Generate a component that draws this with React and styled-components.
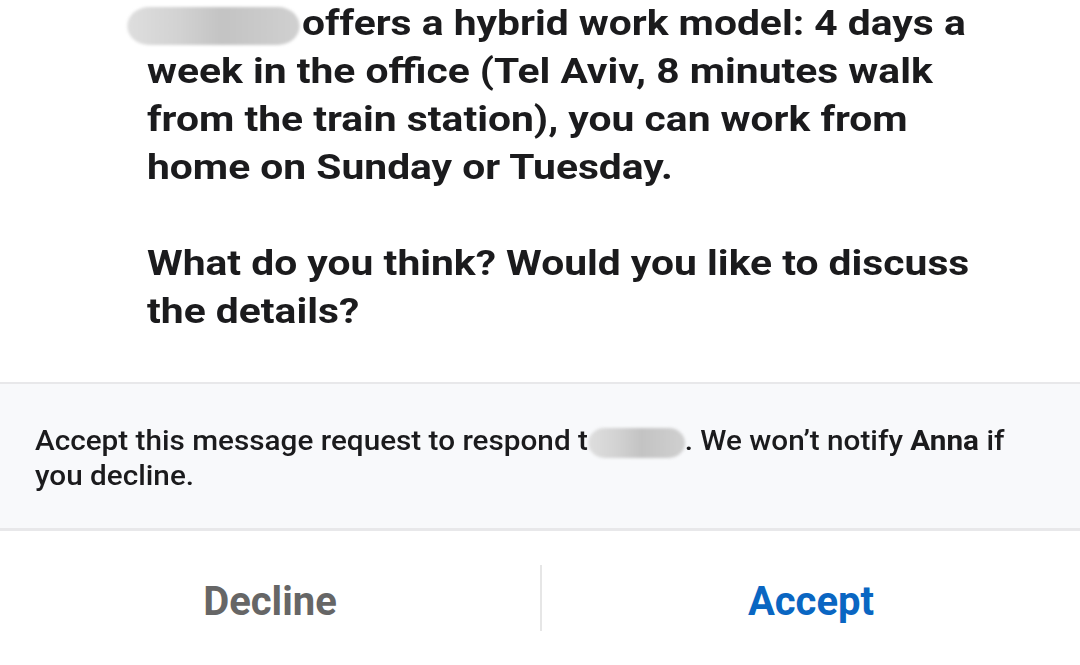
import styled, { createGlobalStyle } from "styled-components";

const GlobalStyle = createGlobalStyle`
  html, body {
    margin: 0;
    padding: 0;
    background: #fff;
  }
  body {
    font-family: Roboto, "Liberation Sans", sans-serif;
    -webkit-font-smoothing: antialiased;
  }
`;

const Screen = styled.div`
  width: 1080px;
  height: 665px;
  overflow: hidden;
  display: flex;
  flex-direction: column;
  background: #fff;
`;

const MessageBody = styled.div`
  padding-left: 147px;
  height: 382px;
  box-sizing: border-box;
`;

// the source text is rendered a bit wider than plain Roboto
const WideText = styled.div`
  width: ${(p) => p.$width}px;
  transform: scaleX(${(p) => p.$scale});
  transform-origin: left top;
`;

const MessageText = styled(WideText)`
  color: #1b1b1d;
  font-size: 35px;
  font-weight: 700;
  line-height: 48px;
`;

const Paragraph = styled.p`
  margin: 0 0 48px;
`;

const Redacted = styled.span`
  display: inline-block;
  vertical-align: middle;
  width: ${(p) => p.$w}px;
  height: ${(p) => p.$h}px;
  margin-left: ${(p) => p.$ml || 0}px;
  margin-right: ${(p) => p.$mr || 0}px;
  border-radius: ${(p) => p.$h / 2}px;
  background: linear-gradient(
    90deg,
    #dedede 0%,
    #d2d2d2 30%,
    #c3c3c3 55%,
    #d0d0d0 100%
  );
  filter: blur(1.5px);
`;

const Banner = styled.div`
  border-top: 2px solid #e8e8ea;
  border-bottom: 3px solid #e8e8ea;
  background: #f8f9fb;
  height: 149px;
  box-sizing: border-box;
  padding: 40px 0 0 35px;
`;

const BannerText = styled(WideText)`
  font-size: 27px;
  font-weight: 500;
  line-height: 35px;
  color: #1b1b1d;
`;

const Name = styled.strong`
  font-weight: 700;
`;

const Actions = styled.div`
  flex: 1;
  display: grid;
  grid-template-columns: 1fr 1fr;
  align-items: center;
`;

const ActionButton = styled.button`
  border: none;
  background: transparent;
  height: 66px;
  font-family: Roboto, "Liberation Sans", sans-serif;
  font-size: 40px;
  font-weight: 700;
  color: ${(p) => (p.$primary ? "#0a66c2" : "#666666")};
  border-left: ${(p) => (p.$divider ? "2px solid #e6e6e6" : "none")};
  cursor: pointer;
  padding: 6px 0 0;
`;

export default function App() {
  return (
    <Screen>
      <GlobalStyle />
      <MessageBody>
        <MessageText $width={740} $scale={1.165}>
          <Paragraph>
            <Redacted $w={148} $h={38} $ml={-17} $mr={2} />
            offers a hybrid work model: 4 days a week in the office (Tel Aviv,
            8 minutes walk from the train station), you can work from home on
            Sunday or Tuesday.
          </Paragraph>
          <Paragraph>
            What do you think? Would you like to discuss the details?
          </Paragraph>
        </MessageText>
      </MessageBody>
      <Banner>
        <BannerText $width={905} $scale={1.1}>
          Accept this message request to respond t
          <Redacted $w={88} $h={30} />. We won’t notify <Name>Anna</Name> if
          you decline.
        </BannerText>
      </Banner>
      <Actions>
        <ActionButton>Decline</ActionButton>
        <ActionButton $primary $divider>
          Accept
        </ActionButton>
      </Actions>
    </Screen>
  );
}
